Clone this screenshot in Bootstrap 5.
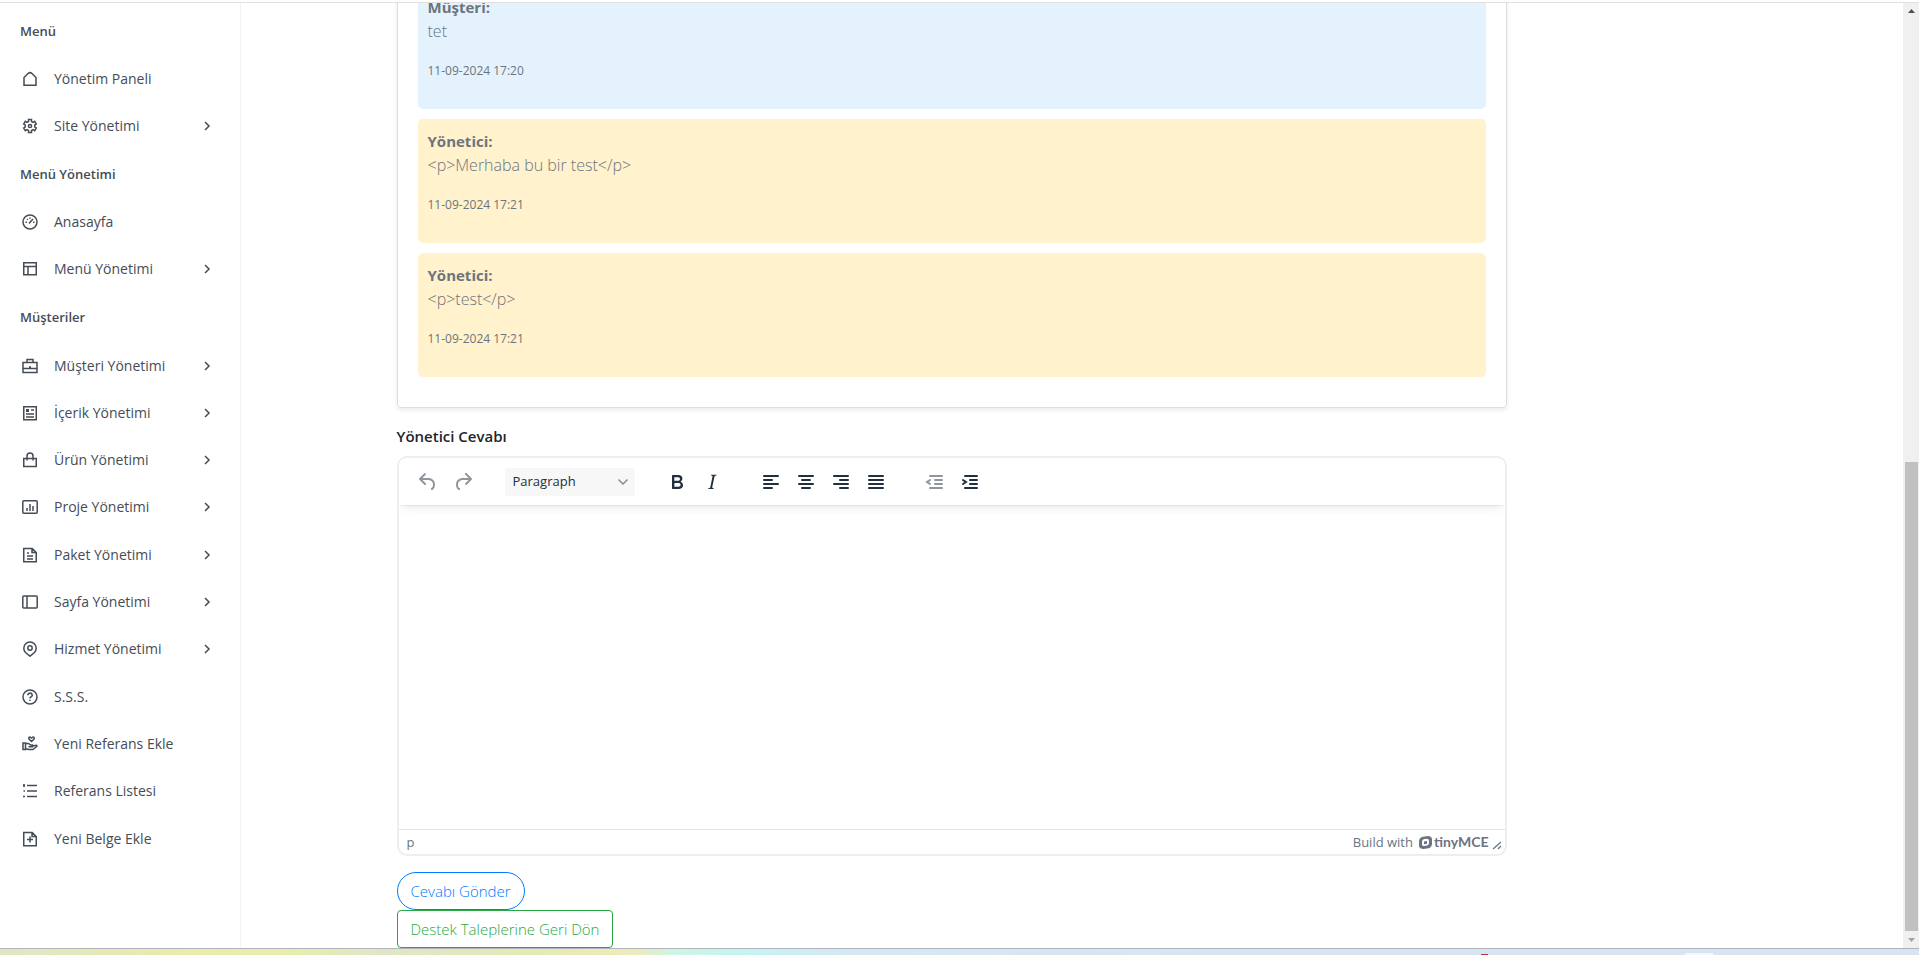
<!DOCTYPE html>
<html lang="tr">
<head>
<meta charset="utf-8">
<meta name="viewport" content="width=device-width, initial-scale=1">
<title>Destek Talebi</title>
<link href="https://cdn.jsdelivr.net/npm/bootstrap@5.3.0/dist/css/bootstrap.min.css" rel="stylesheet">
<style>
body{font-family:"Open Sans","Noto Sans",sans-serif;font-weight:300;font-size:16px;line-height:24px;color:#6c757d;background:#fff}
.topline{height:3px;border-bottom:1px solid #e0e0e0}
.min0{min-height:0}
/* sidebar */
.side{width:241px;padding-top:4px;border-right:1px solid #f3f3f3;color:#454c56}
.side h2{height:49px;margin:0;padding:0 20px;font-size:13px;font-weight:600;display:flex;align-items:center}
.side ul{padding:0}
.side ul.tall{padding-bottom:86px}
.side li{min-height:47px;display:flex;font-size:14px;font-weight:400}
.side .tall li{min-height:30px}
.side li a{flex:1;display:flex;align-items:center;padding:0 27px 0 22px;color:inherit;text-decoration:none}
.side li svg{flex:none;fill:none;stroke:currentColor;stroke-width:1.5}
.side li span{margin-left:16px;flex:1}
/* main column */
.page-main{padding-right:241px}
.column{width:100%;max-width:1110px;flex:none}
.thread{border:1px solid #dcdee0;border-radius:4px;padding:20px;box-shadow:0 2px 4px rgba(0,0,0,.08)}
.msg{padding:10px;margin-bottom:10px;border-radius:5px}
.msg strong{font-weight:700;font-size:15px;display:block}
.msg.guest{background:#e3f2fd}
.msg.admin{background:#fff2cd}
.msg time{display:block;font-size:12px;font-weight:400}
.form-label{color:#212529;font-weight:600;font-size:15px}
/* editor */
.editor{height:400px;border:2px solid #eee;border-radius:10px;color:#222f3e;overflow:hidden}
.tools{position:relative;z-index:1;background:#fff;padding:10px 12px 9px;gap:25px;box-shadow:0 2px 2px -2px rgba(34,47,62,.2),0 8px 8px -4px rgba(34,47,62,.08)}
.tool-set{display:flex;gap:1px}
.tools button{width:34px;height:28px;padding:0;border:0;background:none;color:inherit;display:flex;align-items:center;justify-content:center}
.tools button:disabled{opacity:.5}
.tools svg{width:24px;height:24px;fill:currentColor}
.tools svg.ln{fill:none;stroke:currentColor;stroke-width:2;stroke-linecap:round}
.tools .form-select{width:130px;height:28px;padding:0 26px 0 8px;border:0;border-radius:3px;font-size:13px;font-weight:400;color:#222f3e;background-color:#f7f7f7;background-position:right 6px center;background-size:12px;background-image:url("data:image/svg+xml,%3Csvg xmlns='http://www.w3.org/2000/svg' viewBox='0 0 12 12'%3E%3Cpath d='M1.500 3.500l4.500 4.500 4.500-4.500' fill='none' stroke='%23858d96' stroke-width='1.500'/%3E%3C/svg%3E")}
.editor textarea{border:0;resize:none;outline:0;padding:16px}
.status{height:25px;border-top:1px solid #e3e3e3;padding:0 3px 0 8px;font-size:13px;font-weight:400;color:#6b7480}
.status svg.sym{margin:0 2px 0 6px}
.status .grip{margin:0 0 4px 3px}
.brand{font:700 14px/22px "Lato","Open Sans",sans-serif;color:#6b7480}
/* actions */
.send,.back{height:38px;padding:0 13px;font-size:15px;font-weight:300;display:inline-flex;align-items:center}
.send{--bs-btn-color:#007bff;--bs-btn-border-color:#007bff;border-radius:19px}
.back{--bs-btn-color:#28a745;--bs-btn-border-color:#28a745;border-radius:4px}
/* scroll bar and bottom strip */
.bar{width:16px;background:#f0f0f0;padding:0 1px 0 2px}
.bar i{height:17px;display:flex;align-items:center;justify-content:center}
.bar .thumb{background:#c1c1c1;flex:469}
.bar .room{flex:442}
.strip{height:7px;border-top:1px solid #b0b5bb;background:linear-gradient(90deg,#e2e5c4 0,#e9ecab 10%,#e8edad 15%,#e1e5c6 20%,#e5eab4 28%,#f0eabc 33%,#cdf5e3 35%,#c4f4f1 39%,#d5e7f5 44%,#d9e3f3 75%,#d8e3f4 100%)}
.strip i{position:absolute;bottom:0}
.strip .dot{left:77.200%;width:7px;height:1px;background:#b4343c}
.strip .tab{left:87.800%;width:28px;height:2px;background:#f4f8fd}
</style>
</head>
<body>
<svg class="d-none">
  <symbol id="chev" viewBox="0 0 10 12"><path d="M2 2l4 4-4 4"/></symbol>
</svg>
<div class="vh-100 d-flex flex-column overflow-hidden">
  <div class="topline"></div>
  <div class="d-flex flex-fill min0">
    <nav class="side d-flex flex-column flex-shrink-0">
      <h2>Menü</h2>
      <ul class="list-unstyled m-0">
        <li><a href="#"><svg width="16" height="16"><path d="M2 14.250V6.500L6 2.500Q8 .8 10 2.500L14 6.500V14.250Z"/></svg><span>Yönetim Paneli</span></a></li>
        <li><a href="#"><svg width="16" height="16"><path d="M6.500 1.500h3v2l1.500.800 1.700-1 1.600 2.700-1.500 1v2l1.500 1-1.600 2.700-1.700-1-1.500.800v2h-3v-2L5 11.700l-1.700 1L1.700 10l1.500-1V7L1.700 6l1.600-2.700 1.700 1 1.500-.8z"/><circle cx="8" cy="8" r="1.600"/></svg><span>Site Yönetimi</span><svg width="10" height="12"><use href="#chev"/></svg></a></li>
      </ul>
      <h2>Menü Yönetimi</h2>
      <ul class="list-unstyled m-0">
        <li><a href="#"><svg width="16" height="16"><circle cx="8" cy="8" r="7"/><path d="M7 9.500L11 5M3.500 8.200h1.500M11 8.200h1.500M5 5l.8.8M8 3.500v1.300"/></svg><span>Anasayfa</span></a></li>
        <li><a href="#"><svg width="16" height="16"><path d="M1.750 1.750h12.500v12H1.750zM1.750 5.500h12.500M6 5.500v8"/></svg><span>Menü Yönetimi</span><svg width="10" height="12"><use href="#chev"/></svg></a></li>
      </ul>
      <h2>Müşteriler</h2>
      <ul class="list-unstyled m-0 tall d-flex flex-column flex-fill">
        <li class="flex-fill"><a href="#"><svg width="16" height="16"><path d="M1 4.500h14v10H1zM5 4.500V1.500h6v3M1 10.500h14M7 9h2"/></svg><span>Müşteri Yönetimi</span><svg width="10" height="12"><use href="#chev"/></svg></a></li>
        <li class="flex-fill"><a href="#"><svg width="16" height="16"><path d="M1.750 1.750h12.500v13H1.750zM9 5h3M4 9h8M4 12h8"/><path d="M4 4h3v3H4z" fill="currentColor" stroke="none"/></svg><span>İçerik Yönetimi</span><svg width="10" height="12"><use href="#chev"/></svg></a></li>
        <li class="flex-fill"><a href="#"><svg width="16" height="16"><path d="M1.750 6.500h12.500v8H1.750zM5 8.500V4a3 3 0 0 1 6 0v4.500"/></svg><span>Ürün Yönetimi</span><svg width="10" height="12"><use href="#chev"/></svg></a></li>
        <li class="flex-fill"><a href="#"><svg width="16" height="16"><rect x=".8" y="1.800" width="14.400" height="12.400" rx="1"/><path d="M5 9v3M8 5v7M11 7v5"/></svg><span>Proje Yönetimi</span><svg width="10" height="12"><use href="#chev"/></svg></a></li>
        <li class="flex-fill"><a href="#"><svg width="16" height="16"><path d="M1.750 1.500h8.500l4 4v9.250H1.750zM10 1.500v4h4M5 6h2M5 9h6M5 12h6"/></svg><span>Paket Yönetimi</span><svg width="10" height="12"><use href="#chev"/></svg></a></li>
        <li class="flex-fill"><a href="#"><svg width="16" height="16"><rect x=".8" y="2" width="14.400" height="12" rx="1"/><path d="M5 2v12"/></svg><span>Sayfa Yönetimi</span><svg width="10" height="12"><use href="#chev"/></svg></a></li>
        <li class="flex-fill"><a href="#"><svg width="16" height="16"><path d="M8 15.200L3.500 11.500a6.200 6.200 0 1 1 9 0z"/><circle cx="8" cy="7" r="2.200"/></svg><span>Hizmet Yönetimi</span><svg width="10" height="12"><use href="#chev"/></svg></a></li>
        <li class="flex-fill"><a href="#"><svg width="16" height="16"><circle cx="8" cy="8" r="7"/><path d="M5.800 6.300a2.200 2 0 1 1 3 1.700q-.8.300-.8 1.500M8 10.700v1.300"/></svg><span>S.S.S.</span></a></li>
        <li class="flex-fill"><a href="#"><svg width="16" height="16"><path d="M9.500 5.500L7 3q-.8-2 1-2l1.500 1L11 1q1.800 0 1 2zM1 7h2.500v6.500H1zM3.500 7.500h3l2 1.500h2v1.800H6.500M10.500 10l4-.8q1 .8-.5 1.800l-3 2.500h-4l-3.500-.8"/></svg><span>Yeni Referans Ekle</span></a></li>
        <li class="flex-fill"><a href="#"><svg width="16" height="16"><path d="M5 2.500h10M5 8h10M5 13.500h10M1 2.500h2M1.500 8h1.500M1 13.500h2M2 1v3"/></svg><span>Referans Listesi</span></a></li>
        <li class="flex-fill"><a href="#"><svg width="16" height="16"><path d="M1.750 1.500h8.500l4 4v9.250H1.750zM10 1.500v4h4M8 5.500v6M5 8.500h6"/></svg><span>Yeni Belge Ekle</span></a></li>
      </ul>
    </nav>
    <main class="page-main d-flex flex-column flex-fill justify-content-end align-items-center overflow-hidden">
      <div class="column">
        <section class="thread mb-3">
          <div class="msg guest"><p class="mb-3"><strong>Müşteri:</strong>tet</p><p class="mb-3"><time>11-09-2024 17:20</time></p></div>
          <div class="msg admin"><p class="mb-3"><strong>Yönetici:</strong>&lt;p&gt;Merhaba bu bir test&lt;/p&gt;</p><p class="mb-3"><time>11-09-2024 17:21</time></p></div>
          <div class="msg admin"><p class="mb-3"><strong>Yönetici:</strong>&lt;p&gt;test&lt;/p&gt;</p><p class="mb-3"><time>11-09-2024 17:21</time></p></div>
        </section>
        <form>
          <label class="form-label d-block mb-2" for="reply">Yönetici Cevabı</label>
          <div class="editor d-flex flex-column mb-3">
            <div class="tools d-flex" role="toolbar">
              <div class="tool-set">
                <button type="button" disabled aria-label="Undo"><svg viewBox="0 0 24 24"><path d="M6.400 8H12c3.700 0 6.200 2 6.800 5.100.6 2.700-.4 5.600-2.300 6.800a1 1 0 0 1-1-1.800c1.100-.6 1.800-2.700 1.400-4.600-.5-2.100-2.100-3.500-4.900-3.500H6.400l3.300 3.300a1 1 0 1 1-1.400 1.400l-5-5a1 1 0 0 1 0-1.400l5-5a1 1 0 0 1 1.400 1.400L6.400 8Z"/></svg></button>
                <button type="button" disabled aria-label="Redo"><svg viewBox="0 0 24 24"><path d="M17.600 10H12c-2.800 0-4.400 1.400-4.900 3.500-.4 2 .3 4 1.400 4.600a1 1 0 1 1-1 1.800c-2-1.200-2.900-4.100-2.300-6.800.6-3 3-5.100 6.800-5.100h5.600l-3.300-3.300a1 1 0 1 1 1.400-1.400l5 5a1 1 0 0 1 0 1.400l-5 5a1 1 0 0 1-1.400-1.400l3.300-3.300Z"/></svg></button>
              </div>
              <select class="form-select" aria-label="Block format"><option>Paragraph</option></select>
              <div class="tool-set">
                <button type="button" aria-label="Bold"><svg viewBox="0 0 24 24"><path d="M7.800 19c-.3 0-.5 0-.6-.2l-.2-.5V5.700c0-.2 0-.4.2-.5l.6-.2h5c1.500 0 2.700.3 3.500 1 .7.6 1.100 1.400 1.100 2.500a3 3 0 0 1-.6 1.900c-.4.6-1 1-1.600 1.200.4.1.9.3 1.300.6s.8.7 1 1.200c.4.4.5 1 .5 1.600 0 1.300-.4 2.300-1.300 3-.8.7-2.100 1-3.800 1H7.800Zm5-8.300c.6 0 1.200-.1 1.600-.5.4-.3.6-.7.6-1.300 0-1.100-.8-1.700-2.300-1.700H9.300v3.500h3.400Zm.5 6c.7 0 1.300-.1 1.700-.4.4-.4.6-.9.6-1.500s-.2-1-.7-1.400c-.4-.3-1-.4-2-.4H9.400v3.800h4Z"/></svg></button>
                <button type="button" aria-label="Italic"><svg viewBox="0 0 24 24"><path d="m16.700 4.700-.1.900h-.3c-.6 0-1 0-1.400.3-.3.3-.4.6-.5 1.100l-2.100 9.800v.6c0 .5.4.8 1.400.8h.2l-.2.800H8l.2-.8h.2c1.100 0 1.800-.5 2-1.500l2-9.800.1-.5c0-.6-.4-.8-1.400-.8h-.3l.2-.9h5.800Z"/></svg></button>
              </div>
              <div class="tool-set">
                <button type="button" aria-label="Align left"><svg class="ln" viewBox="0 0 24 24"><path d="M5 6h14M5 10h8M5 14h14M5 18h8"/></svg></button>
                <button type="button" aria-label="Align center"><svg class="ln" viewBox="0 0 24 24"><path d="M5 6h14M8 10h8M5 14h14M8 18h8"/></svg></button>
                <button type="button" aria-label="Align right"><svg class="ln" viewBox="0 0 24 24"><path d="M5 6h14M11 10h8M5 14h14M11 18h8"/></svg></button>
                <button type="button" aria-label="Justify"><svg class="ln" viewBox="0 0 24 24"><path d="M5 6h14M5 10h14M5 14h14M5 18h14"/></svg></button>
              </div>
              <div class="tool-set">
                <button type="button" disabled aria-label="Decrease indent"><svg class="ln" viewBox="0 0 24 24"><path d="M7 6h12M12 10h7M12 14h7M7 18h12M7 10l-3 2 3 2"/></svg></button>
                <button type="button" aria-label="Increase indent"><svg class="ln" viewBox="0 0 24 24"><path d="M7 6h12M12 10h7M12 14h7M7 18h12M5 10l3 2-3 2"/></svg></button>
              </div>
            </div>
            <textarea id="reply" class="flex-fill w-100"></textarea>
            <div class="status d-flex align-items-center">
              <span class="me-auto">p</span><span>Build with</span>
              <svg class="sym" width="13" height="13" viewBox="0 0 13 13"><path fill="#6b7480" fill-rule="evenodd" d="M4 .8L9 0q3.500 0 4 3v5q-.3 3.500-3.500 4.200L4.500 13Q.5 13 0 10V5Q.3 1.500 4 .8zM5.500 3Q3.200 3.300 3 5.500v3q.2 1.700 2 1.500l3-.5q2-.4 2-2.500V4.500q-.2-1.800-2-1.800zM5 5.500L8 5v2.800L5 8.300z"/></svg>
              <span class="brand">tinyMCE</span>
              <svg class="grip align-self-end" width="10" height="10" viewBox="0 0 10 10"><path d="M1 9l8-7M6 9l3-3" stroke="#6b7480" stroke-width="1.300" fill="none"/></svg>
            </div>
          </div>
          <button type="submit" class="btn btn-outline-primary send">Cevabı Gönder</button>
        </form>
        <a href="#" class="btn btn-outline-success back">Destek Taleplerine Geri Dön</a>
      </div>
    </main>
    <div class="bar d-flex flex-column flex-shrink-0" aria-hidden="true">
      <i><svg width="7" height="4"><path d="M0 4L3.500 0 7 4z" fill="#505050"/></svg></i>
      <div class="room"></div><div class="thumb"></div>
      <i><svg width="7" height="4"><path d="M0 0L3.500 4 7 0z" fill="#a3a3a3"/></svg></i>
    </div>
  </div>
  <div class="strip position-relative"><i class="dot"></i><i class="tab"></i></div>
</div>
<script src="https://cdn.jsdelivr.net/npm/bootstrap@5.3.0/dist/js/bootstrap.bundle.min.js"></script>
</body>
</html>
